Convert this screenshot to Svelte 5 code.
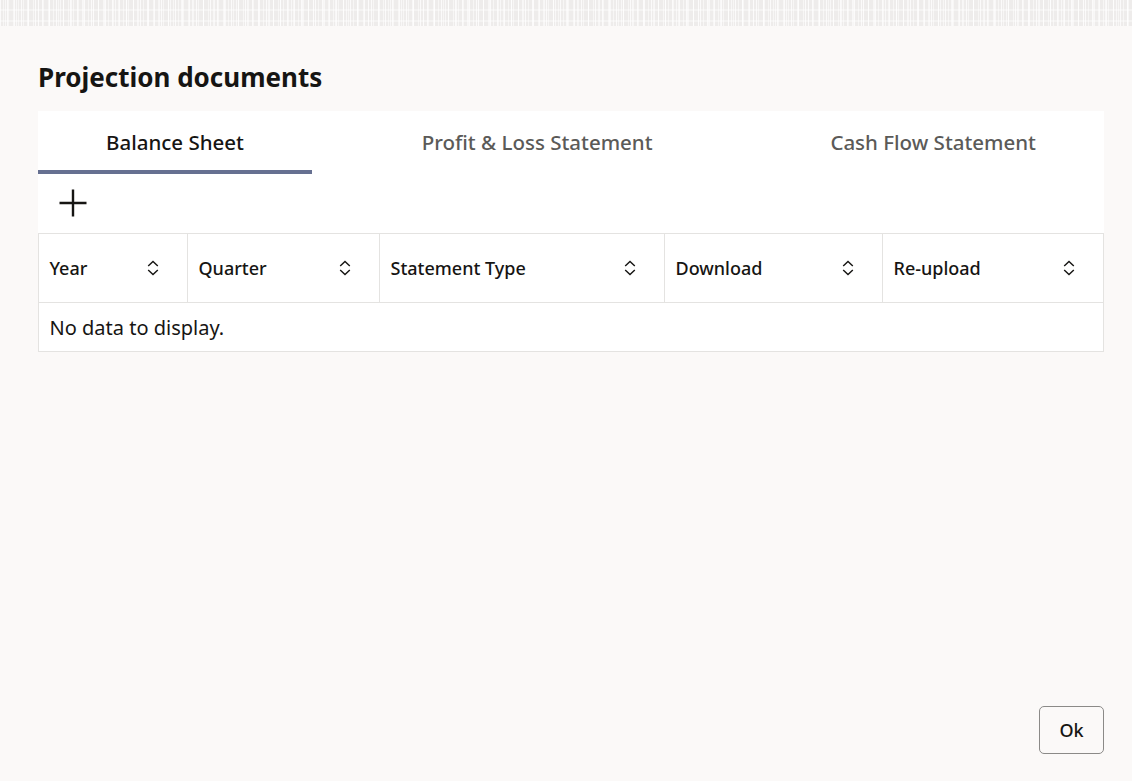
<script>
  const tabs = ['Balance Sheet', 'Profit & Loss Statement', 'Cash Flow Statement'];
  const cols = ['Year', 'Quarter', 'Statement Type', 'Download', 'Re-upload'];
</script>

<div class="page">
  <div class="texture"></div>
  <main class="dialog">
    <h1>Projection documents</h1>
    <section class="panel">
      <div class="tabs">
        {#each tabs as t, i}
          <div class="tab" class:active={i === 0}>{t}</div>
        {/each}
      </div>
      <div class="toolbar">
        <svg class="plus" width="30" height="30" viewBox="0 0 30 30" aria-label="Add">
          <path d="M15 1.5v27M1.5 15h27" stroke="#161513" stroke-width="2.4" fill="none" />
        </svg>
      </div>
      <div class="table">
        {#each cols as c}
          <div class="th">
            <span>{c}</span>
            <svg width="14" height="18" viewBox="0 0 14 18">
              <path d="M2.2 7 7 2.4 11.8 7M2.2 11 7 15.6 11.8 11" stroke="#161513" stroke-width="1.4" fill="none" />
            </svg>
          </div>
        {/each}
        <div class="empty">No data to display.</div>
      </div>
    </section>
    <footer>
      <button>Ok</button>
    </footer>
  </main>
</div>

<style>
  :global(body) {
    margin: 0;
    background: #fbf9f8;
    font-family: "Noto Sans", "Open Sans", sans-serif;
    color: #161513;
  }
  .page {
    display: flex;
    flex-direction: column;
    height: 781px;
    overflow: hidden;
  }
  .texture {
    height: 26px;
    flex: none;
    background-color: #eeeceb;
    background-image:
      linear-gradient(90deg, rgba(255,255,255,.75) 0 1px, transparent 1px),
      linear-gradient(90deg, transparent 0 3px, rgba(255,255,255,.6) 3px 4px, transparent 4px),
      linear-gradient(90deg, transparent 0 2px, rgba(255,255,255,.5) 2px 3px, transparent 3px),
      linear-gradient(0deg, rgba(255,255,255,.35) 0 2px, transparent 2px);
    background-size: 7px 13px, 11px 9px, 5px 17px, 23px 11px;
    background-position: 0 0, 2px 4px, 1px 7px, 0 0;
  }
  .dialog {
    flex: 1;
    display: flex;
    flex-direction: column;
    padding: 0 28px 27px 38px;
    min-height: 0;
  }
  h1 {
    margin: 0;
    padding-top: 32px;
    height: 53px;
    font-size: 26px;
    line-height: 38px;
    font-weight: 700;
    white-space: nowrap;
  }
  .panel {
    background: #fff;
    display: flex;
    flex-direction: column;
  }
  .tabs {
    display: flex;
    justify-content: space-between;
    height: 63px;
  }
  .tab {
    padding: 16px 68px 0;
    font-size: 20.5px;
    line-height: 30px;
    font-weight: 500;
    color: #5b5a58;
    white-space: nowrap;
    box-sizing: border-box;
  }
  .tab.active {
    color: #161513;
    border-bottom: 4px solid #667091;
  }
  .toolbar {
    height: 59px;
    box-sizing: border-box;
    display: flex;
    align-items: center;
    padding: 0 0 1px 20px;
  }
  .table {
    display: grid;
    grid-template-columns: 149px 192px 285px 218px 1fr;
    border: 1px solid #e4e3e1;
  }
  .th {
    height: 69px;
    box-sizing: border-box;
    display: flex;
    align-items: center;
    justify-content: space-between;
    padding: 0 27px 0 10.5px;
    border-right: 1px solid #e4e3e1;
    border-bottom: 1px solid #e4e3e1;
    font-size: 18px;
    font-weight: 500;
    white-space: nowrap;
  }
  .th:nth-child(5) {
    border-right: 0;
  }
  .empty {
    grid-column: 1 / -1;
    height: 48px;
    padding-left: 10.5px;
    display: flex;
    align-items: center;
    font-size: 20px;
  }
  footer {
    margin-top: auto;
    display: flex;
    justify-content: flex-end;
  }
  button {
    width: 65px;
    height: 48px;
    background: transparent;
    border: 1px solid #8b8a88;
    border-radius: 5px;
    font: 500 18px "Noto Sans", "Open Sans", sans-serif;
    color: #161513;
    padding: 0;
  }
</style>
